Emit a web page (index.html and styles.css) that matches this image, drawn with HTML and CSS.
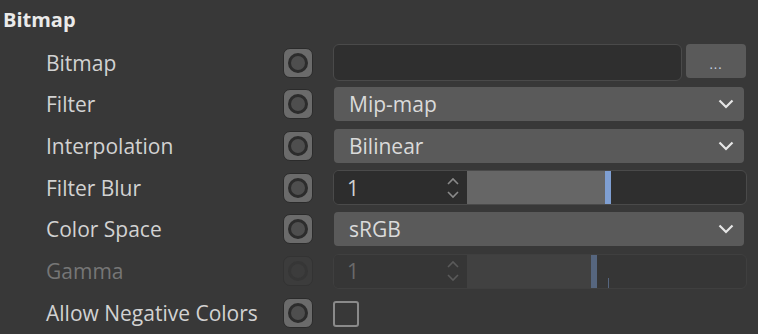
FILE: index.html
```html
<!DOCTYPE html>
<html>
	<head>
		<meta charset="utf-8">
		<title>Bitmap</title>
		<link rel="stylesheet" href="styles.css">
	</head>
	<body>
		<div class="panel">
			<div class="group-title">Bitmap</div>
			<div class="rows">
				<div class="row">
					<span class="label">Bitmap</span>
					<span class="anim"><i></i></span>
					<div class="ctrl file">
						<div class="file-field"></div>
						<a href="javascript:void(0)" class="file-btn">...</a>
					</div>
				</div>
				<div class="row">
					<span class="label">Filter</span>
					<span class="anim"><i></i></span>
					<div class="ctrl select">
						<span>Mip-map</span>
						<svg width="16" height="10" viewBox="0 0 16 10"><path d="M1.5 1.5 L8 8 L14.5 1.5" fill="none" stroke="#e6e6e6" stroke-width="2.2"/></svg>
					</div>
				</div>
				<div class="row">
					<span class="label">Interpolation</span>
					<span class="anim"><i></i></span>
					<div class="ctrl select">
						<span>Bilinear</span>
						<svg width="16" height="10" viewBox="0 0 16 10"><path d="M1.5 1.5 L8 8 L14.5 1.5" fill="none" stroke="#e6e6e6" stroke-width="2.2"/></svg>
					</div>
				</div>
				<div class="row">
					<span class="label">Filter Blur</span>
					<span class="anim"><i></i></span>
					<div class="ctrl slider">
						<div class="num">
							<span>1</span>
							<svg width="14" height="24" viewBox="0 0 14 24"><path d="M2 8 L7 3 L12 8 M2 16 L7 21 L12 16" fill="none" stroke="#8a8a8a" stroke-width="1.6"/></svg>
						</div>
						<div class="track">
							<div class="fill" style="width:138px"></div>
							<div class="mark"></div>
						</div>
					</div>
				</div>
				<div class="row">
					<span class="label">Color Space</span>
					<span class="anim"><i></i></span>
					<div class="ctrl select">
						<span>sRGB</span>
						<svg width="16" height="10" viewBox="0 0 16 10"><path d="M1.5 1.5 L8 8 L14.5 1.5" fill="none" stroke="#e6e6e6" stroke-width="2.2"/></svg>
					</div>
				</div>
				<div class="row off">
					<span class="label">Gamma</span>
					<span class="anim"><i></i></span>
					<div class="ctrl slider">
						<div class="num">
							<span>1</span>
							<svg width="14" height="24" viewBox="0 0 14 24"><path d="M2 8 L7 3 L12 8 M2 16 L7 21 L12 16" fill="none" stroke="#5a5a5a" stroke-width="1.6"/></svg>
						</div>
						<div class="track">
							<div class="fill" style="width:124px"></div>
							<div class="mark"></div>
							<div class="tick"></div>
						</div>
					</div>
				</div>
				<div class="row">
					<span class="label">Allow Negative Colors</span>
					<span class="anim"><i></i></span>
					<div class="ctrl">
						<span class="check"></span>
					</div>
				</div>
			</div>
		</div>
	</body>
</html>
```

FILE: styles.css
```css
*{margin:0;padding:0;box-sizing:border-box;}
a{text-decoration:none;}
body{background:#383838;font-family:"Open Sans","Noto Sans",sans-serif;color:#d2d2d2;}
.panel{width:758px;height:334px;overflow:hidden;}
.group-title{height:42px;padding:3px 0 0 3px;font-size:20px;font-weight:700;color:#eaeaea;line-height:34px;}
.rows{display:grid;grid-auto-rows:41.67px;}
.row{display:grid;grid-template-columns:217px 30px 414px;column-gap:20px;align-items:center;padding-left:46px;}
.label{font-size:21px;line-height:26px;white-space:nowrap;}

/* animation button */
.anim{width:30px;height:30px;border-radius:7px;background:#6b6b6b;border:1px solid #2b2b2b;display:flex;align-items:center;justify-content:center;}
.anim i{display:block;width:20px;height:20px;border-radius:50%;border:3px solid #2c2c2c;background:#4e4e4e;}

.ctrl{height:35px;display:flex;align-items:center;}

.file{gap:4px;}
.file-field{width:349px;height:37px;background:#2f2f2f;border:1px solid #4a4a4a;border-radius:6px;}
.file-btn{width:60px;height:34px;margin-top:-3px;background:#5a5a5a;border-radius:4px;color:#c7d3e2;font-size:13px;text-align:center;line-height:40px;letter-spacing:1px;}

.select{margin:0 3px 0 1px;height:34px;background:#5a5a5a;border-radius:4px;padding:0 10px 0 15px;justify-content:space-between;font-size:21px;color:#dadada;}

.slider{border:1px solid #4a4a4a;border-radius:6px;overflow:hidden;background:#2f2f2f;}
.num{width:133px;height:100%;display:flex;align-items:center;justify-content:space-between;padding:0 7px 0 13px;background:#2d2d2d;font-size:21px;}
.track{flex:1;height:100%;display:flex;position:relative;}
.fill{height:100%;background:#666;}
.mark{width:6px;height:100%;background:#7f9fd2;}

.check{width:26px;height:26px;border:2px solid #8a8a8a;border-radius:3px;margin-top:2px;}

/* disabled row */
.off .label{color:#767676;}
.off .anim{background:#3c3c3c;border-color:#333;}
.off .anim i{background:#3c3c3c;border-color:#363636;}
.off .slider{border-color:#3f3f3f;background:#363636;}
.off .num{background:#363636;color:#6a6a6a;}
.off .fill{background:#414141;}
.off .mark{background:#56667f;}
.off .tick{position:absolute;left:141px;bottom:0;width:1px;height:10px;background:#56667f;}
```
